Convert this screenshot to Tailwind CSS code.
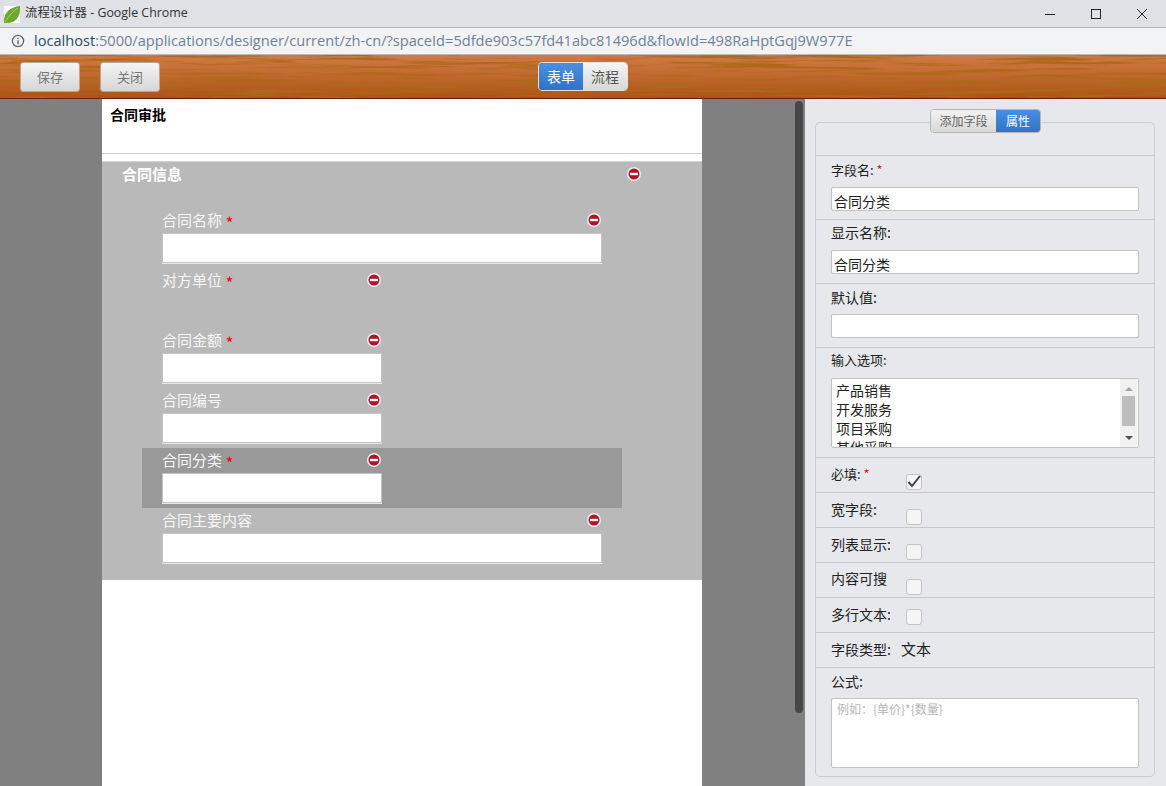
<!DOCTYPE html>
<html lang="zh-CN">
<head>
<meta charset="UTF-8">
<title>流程设计器</title>
<script src="https://cdn.jsdelivr.net/npm/@tailwindcss/browser@4"></script>
</head>
<body class="w-[1166px] h-[786px] overflow-hidden font-['Noto_Sans_CJK_SC','Noto_Sans',sans-serif] text-[13px] text-[#222]">

<!-- chrome title bar -->
<div class="h-[28px] bg-[#dee1e6] border-b border-[#b4b7ba] flex items-center pl-[4px] pr-[1px]">
  <svg class="w-[16px] h-[17px] mt-[1px]" viewBox="0 0 16 17"><rect width="16" height="17" fill="#fff"/><path d="M0 17C-1 8 5 1 16 0c1 10-4 17-12 17-1 0-3 0-4 0z" fill="#6fa82f"/><path d="M1 16C5 10 9 5 14 2" stroke="#a6d05e" stroke-width="1" fill="none"/></svg>
  <span class="ml-[5px] text-[12.4px] text-[#333] font-['Open_Sans','Noto_Sans_CJK_SC',sans-serif]">流程设计器 - Google Chrome</span>
  <div class="ml-auto flex items-center">
    <svg class="w-[46px] h-[14px]" viewBox="0 0 46 14"><path d="M18 7.5h10" stroke="#222" stroke-width="1"/></svg>
    <svg class="w-[46px] h-[14px]" viewBox="0 0 46 14"><rect x="18.5" y="2.5" width="9" height="9" fill="none" stroke="#222"/></svg>
    <svg class="w-[46px] h-[14px]" viewBox="0 0 46 14"><path d="M18 2l10 10M28 2L18 12" stroke="#222" fill="none"/></svg>
  </div>
</div>

<!-- address bar -->
<div class="h-[27px] bg-[#f1f3f4] border-b border-[#b9babb] flex items-center pl-[11px]">
  <svg class="w-[14px] h-[14px]" viewBox="0 0 14 14"><circle cx="7" cy="7" r="5.6" fill="none" stroke="#5f6368" stroke-width="1.3"/><path d="M7 6.2v4M7 3.8v1.3" stroke="#5f6368" stroke-width="1.4"/></svg>
  <span class="ml-[9px] text-[14.6px] text-[#6f8299] font-['Open_Sans',sans-serif] whitespace-nowrap"><span class="text-[#2f4a63]">localhost</span>:5000/applications/designer/current/zh-cn/?spaceId=5dfde903c57fd41abc81496d&amp;flowId=498RaHptGqj9W977E</span>
</div>

<!-- wood toolbar -->
<div class="relative h-[44px] border-b border-[#6e1d02] overflow-hidden">
  <svg class="absolute inset-0 w-full h-full" viewBox="0 0 1166 43" preserveAspectRatio="none">
    <defs>
      <linearGradient id="wood" x1="0" y1="0" x2="0" y2="1"><stop offset="0" stop-color="#d07a46"/><stop offset="0.5" stop-color="#c0682e"/><stop offset="1" stop-color="#aa5414"/></linearGradient>
      <filter id="grain" x="0" y="0" width="100%" height="100%"><feTurbulence type="fractalNoise" baseFrequency="0.01 0.28" numOctaves="4" seed="7"/><feColorMatrix values="0 0 0 0 0.42  0 0 0 0 0.14  0 0 0 0 0.01  4.5 0 0 0 -2.15"/></filter>
    </defs>
    <rect width="1166" height="43" fill="url(#wood)"/>
    <rect width="1166" height="43" filter="url(#grain)"/>
  </svg>
  <div class="relative h-full flex items-center pl-[20px]">
    <button class="w-[60px] h-[30px] rounded-[3px] border border-[#b0a79f] bg-linear-to-b from-[#f4f4f4] to-[#d6d6d6] text-[13px] text-[#777]">保存</button>
    <button class="ml-[20px] w-[60px] h-[30px] rounded-[3px] border border-[#b0a79f] bg-linear-to-b from-[#f4f4f4] to-[#d6d6d6] text-[13px] text-[#777]">关闭</button>
    <div class="ml-[378px] flex h-[29px] rounded-[4px] overflow-hidden border border-[#e8e0da] text-[14px]">
      <div class="w-[44px] flex items-center justify-center bg-linear-to-b from-[#4a8fe0] to-[#3272c8] text-white">表单</div>
      <div class="w-[44px] flex items-center justify-center bg-linear-to-b from-[#f4f4f4] to-[#d8d8d8] text-[#555]">流程</div>
    </div>
  </div>
</div>

<div class="flex h-[687px]">
  <!-- designer canvas -->
  <div class="relative w-[805px] bg-[#808080] pl-[102px]">
    <div class="w-[600px] h-full bg-white">
      <div class="h-[55px] border-b border-[#cccccc] pl-[8px] pt-[5px] font-bold text-[14px] leading-[20px] text-black">合同审批</div>
      <div class="mt-[7px] h-[419px] bg-[#b9b9b9] border-t border-[#d4d4d4]">
        <div class="h-[46px] pl-[20px] pr-[61px] pt-[2px] flex items-start justify-between">
          <span class="font-bold text-[15px] leading-[20px] text-white">合同信息</span>
          <svg class="w-[14px] h-[14px] mt-[3px]" viewBox="0 0 14 14"><circle cx="7" cy="7" r="7" fill="#eee"/><circle cx="7" cy="7" r="5.5" fill="#b01228"/><rect x="3" y="5.8" width="8" height="2.4" fill="#fff"/></svg>
        </div>
        <div class="ml-[40px] w-[480px]">
          <div class="h-[60px] pl-[20px] pr-[20px]">
            <div class="flex items-center h-[25px]"><span class="text-[15px] text-[#f6f6f6]">合同名称</span><span class="ml-[4px] mt-[4px] text-[14px] font-bold text-[#f01020]">*</span><svg class="ml-auto mr-[1px] mb-[2px] w-[14px] h-[14px]" viewBox="0 0 14 14"><circle cx="7" cy="7" r="7" fill="#eee"/><circle cx="7" cy="7" r="5.5" fill="#b01228"/><rect x="3" y="5.8" width="8" height="2.4" fill="#fff"/></svg></div>
            <div class="h-[30px] bg-white border border-[#c4c4c4] shadow-[0_1px_0_#e8e8e8]"></div>
          </div>
          <div class="h-[60px] pl-[20px] w-[240px]">
            <div class="flex items-center h-[25px]"><span class="text-[15px] text-[#f6f6f6]">对方单位</span><span class="ml-[4px] mt-[4px] text-[14px] font-bold text-[#f01020]">*</span><svg class="ml-auto mr-[1px] mb-[2px] w-[14px] h-[14px]" viewBox="0 0 14 14"><circle cx="7" cy="7" r="7" fill="#eee"/><circle cx="7" cy="7" r="5.5" fill="#b01228"/><rect x="3" y="5.8" width="8" height="2.4" fill="#fff"/></svg></div>
          </div>
          <div class="h-[60px] pl-[20px]">
            <div class="w-[220px] flex items-center h-[25px]"><span class="text-[15px] text-[#f6f6f6]">合同金额</span><span class="ml-[4px] mt-[4px] text-[14px] font-bold text-[#f01020]">*</span><svg class="ml-auto mr-[1px] mb-[2px] w-[14px] h-[14px]" viewBox="0 0 14 14"><circle cx="7" cy="7" r="7" fill="#eee"/><circle cx="7" cy="7" r="5.5" fill="#b01228"/><rect x="3" y="5.8" width="8" height="2.4" fill="#fff"/></svg></div>
            <div class="w-[220px] h-[30px] bg-white border border-[#c4c4c4] shadow-[0_1px_0_#e8e8e8]"></div>
          </div>
          <div class="h-[60px] pl-[20px]">
            <div class="w-[220px] flex items-center h-[25px]"><span class="text-[15px] text-[#f6f6f6]">合同编号</span><svg class="ml-auto mr-[1px] mb-[2px] w-[14px] h-[14px]" viewBox="0 0 14 14"><circle cx="7" cy="7" r="7" fill="#eee"/><circle cx="7" cy="7" r="5.5" fill="#b01228"/><rect x="3" y="5.8" width="8" height="2.4" fill="#fff"/></svg></div>
            <div class="w-[220px] h-[30px] bg-white border border-[#c4c4c4] shadow-[0_1px_0_#e8e8e8]"></div>
          </div>
          <div class="h-[60px] pl-[20px] bg-[#999999]">
            <div class="w-[220px] flex items-center h-[25px]"><span class="text-[15px] text-[#f6f6f6]">合同分类</span><span class="ml-[4px] mt-[4px] text-[14px] font-bold text-[#f01020]">*</span><svg class="ml-auto mr-[1px] mb-[2px] w-[14px] h-[14px]" viewBox="0 0 14 14"><circle cx="7" cy="7" r="7" fill="#eee"/><circle cx="7" cy="7" r="5.5" fill="#b01228"/><rect x="3" y="5.8" width="8" height="2.4" fill="#fff"/></svg></div>
            <div class="w-[220px] h-[30px] bg-white border border-[#c4c4c4] shadow-[0_1px_0_#e8e8e8]"></div>
          </div>
          <div class="h-[60px] pl-[20px] pr-[20px]">
            <div class="flex items-center h-[25px]"><span class="text-[15px] text-[#f6f6f6]">合同主要内容</span><svg class="ml-auto mr-[1px] mb-[2px] w-[14px] h-[14px]" viewBox="0 0 14 14"><circle cx="7" cy="7" r="7" fill="#eee"/><circle cx="7" cy="7" r="5.5" fill="#b01228"/><rect x="3" y="5.8" width="8" height="2.4" fill="#fff"/></svg></div>
            <div class="h-[30px] bg-white border border-[#c4c4c4] shadow-[0_1px_0_#e8e8e8]"></div>
          </div>
        </div>
      </div>
    </div>
    <!-- scrollbar -->
    <div class="absolute left-[795px] top-[2px] w-[8px] h-[612px] rounded-[4px] bg-[#474747]"></div>
  </div>

  <!-- property panel -->
  <div class="relative w-[361px] bg-[#e7e8eb] pt-[23px] pl-[10px]">
    <div class="w-[340px] h-[655px] border border-[#cdcdcd] rounded-[5px]">
      <div class="h-[33px] border-b border-[#c8c8c8]"></div>
      <div class="h-[64px] border-b border-[#c8c8c8] px-[15px]">
        <div class="h-[31px] pt-[4px] text-[13px] leading-[20px]">字段名: <span class="text-[#f01020]">*</span></div>
        <div class="h-[24px] bg-white border border-[#c2c2c2] rounded-[2px] pl-[2px] text-[14px] leading-[26px] overflow-hidden">合同分类</div>
      </div>
      <div class="h-[64px] border-b border-[#c8c8c8] px-[15px]">
        <div class="h-[30px] pt-[2px] text-[14px] leading-[20px]">显示名称:</div>
        <div class="h-[24px] bg-white border border-[#c2c2c2] rounded-[2px] pl-[2px] text-[14px] leading-[26px] overflow-hidden">合同分类</div>
      </div>
      <div class="h-[64px] border-b border-[#c8c8c8] px-[15px]">
        <div class="h-[30px] pt-[3px] text-[14px] leading-[20px]">默认值:</div>
        <div class="h-[24px] bg-white border border-[#c2c2c2] rounded-[2px]"></div>
      </div>
      <div class="h-[110px] border-b border-[#c8c8c8] px-[15px]">
        <div class="h-[30px] pt-[2px] text-[13px] leading-[20px]">输入选项:</div>
        <div class="h-[70px] bg-white border border-[#c2c2c2] rounded-[2px] overflow-hidden flex justify-between">
          <div class="pl-[4px] text-[14px] leading-[19px] pt-[2px]">
            <div>产品销售</div><div>开发服务</div><div>项目采购</div><div>其他采购</div>
          </div>
          <div class="w-[17px] mr-[1px] bg-[#f1f1f1] flex flex-col items-center pt-[8px]">
            <div class="w-0 h-0 border-x-[4px] border-x-transparent border-b-[4px] border-b-[#a3a3a3]"></div>
            <div class="mt-[5px] w-[13px] h-[30px] bg-[#bdbdbd]"></div>
            <div class="mt-[10px] w-0 h-0 border-x-[4px] border-x-transparent border-t-[4px] border-t-[#505050]"></div>
          </div>
        </div>
      </div>
      <div class="h-[35px] border-b border-[#c8c8c8] pl-[15px] flex">
        <div class="w-[75px] pt-[6px] text-[13px] leading-[20px]">必填: <span class="text-[#f01020]">*</span></div>
        <div class="mt-[16px] w-[16px] h-[16px] rounded-[3px] bg-[#f5f5f5] border border-[#c4c4c4] flex items-center justify-center">
          <svg class="w-[16px] h-[16px] shrink-0" viewBox="0 0 16 16"><path d="M2.5 8l3.5 4L14 2" fill="none" stroke="#444" stroke-width="2"/></svg>
        </div>
      </div>
      <div class="h-[35px] border-b border-[#c8c8c8] pl-[15px] flex">
        <div class="w-[75px] pt-[6px] text-[14px] leading-[20px]">宽字段:</div>
        <div class="mt-[16px] w-[16px] h-[16px] rounded-[3px] bg-[#f5f5f5] border border-[#c4c4c4]"></div>
      </div>
      <div class="h-[35px] border-b border-[#c8c8c8] pl-[15px] flex">
        <div class="w-[75px] pt-[6px] text-[14px] leading-[20px]">列表显示:</div>
        <div class="mt-[16px] w-[16px] h-[16px] rounded-[3px] bg-[#f5f5f5] border border-[#c4c4c4]"></div>
      </div>
      <div class="h-[35px] border-b border-[#c8c8c8] pl-[15px] flex">
        <div class="w-[75px] pt-[5px] text-[14px] leading-[20px]">内容可搜</div>
        <div class="mt-[16px] w-[16px] h-[16px] rounded-[3px] bg-[#f5f5f5] border border-[#c4c4c4]"></div>
      </div>
      <div class="h-[35px] border-b border-[#c8c8c8] pl-[15px] flex">
        <div class="w-[75px] pt-[6px] text-[14px] leading-[20px]">多行文本:</div>
        <div class="mt-[11px] w-[16px] h-[16px] rounded-[3px] bg-[#f5f5f5] border border-[#c4c4c4]"></div>
      </div>
      <div class="h-[35px] border-b border-[#c8c8c8] pl-[15px] pb-[2px] flex items-center text-[14px]">
        <span class="w-[70px]">字段类型:</span><span class="text-[15px]">文本</span>
      </div>
      <div class="px-[15px]">
        <div class="h-[30px] pt-[3px] text-[14px] leading-[20px]">公式:</div>
        <div class="h-[70px] bg-white border border-[#c2c2c2] rounded-[2px] pl-[5px] pt-[2px] text-[12px] leading-[16px] text-[#b5b5b5]">例如：{单价}*{数量}</div>
      </div>
    </div>
    <!-- tab switch sits over the fieldset border -->
    <div class="absolute left-[125px] top-[10px] flex h-[24px] rounded-[4px] overflow-hidden border border-[#b5b5b5] text-[12px]">
      <div class="w-[65px] flex items-center justify-center bg-linear-to-b from-[#f2f2f2] to-[#d8d8d8] text-[#666]">添加字段</div>
      <div class="w-[44px] flex items-center justify-center bg-linear-to-b from-[#4a8fe0] to-[#3272c8] text-white">属性</div>
    </div>
  </div>
</div>
</body>
</html>
